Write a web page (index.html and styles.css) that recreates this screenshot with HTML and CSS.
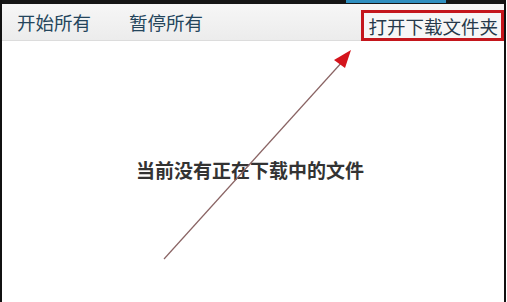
FILE: index.html
```html
<!DOCTYPE html>
<html lang="zh-CN">
<head>
  <meta charset="UTF-8" />
  <meta name="viewport" content="width=device-width, initial-scale=1.0" />
  <title>下载管理</title>
  <link rel="stylesheet" href="styles.css">
</head>
<body>
  <div class="window">
    <!-- cut-off edge of the window above -->
    <div class="top-strip">
      <span class="strip-fill"></span>
      <span class="strip-blue"></span>
      <span class="strip-fill short"></span>
    </div>

    <div class="toolbar">
      <a href="#" class="tool-link">开始所有</a>
      <a href="#" class="tool-link">暂停所有</a>
      <a href="#" class="tool-link open-folder">打开下载文件夹</a>
    </div>

    <div class="content">
      <p class="empty-text">当前没有正在下载中的文件</p>

      <!-- annotation arrow pointing at the folder button -->
      <svg class="arrow" width="507" height="261" viewBox="0 0 507 261">
        <line x1="164" y1="218" x2="343" y2="20" stroke="#8a6464" stroke-width="1.2" />
        <polygon points="351,9 334,19 345,27" fill="#d4141c" />
      </svg>
    </div>
  </div>
</body>
</html>
```

FILE: styles.css
```css
body {
  margin: 0;
  font-family: "Noto Sans CJK SC", "Noto Sans", sans-serif;
  background: #ffffff;
}

.window {
  position: relative;
  box-sizing: border-box;
  width: 506px;
  height: 100vh;
  border-left: 2px solid #111;
  border-right: 2px solid #111;
  display: flex;
  flex-direction: column;
  overflow: hidden;
}

.top-strip {
  display: flex;
  height: 4px;
  background: #151515;
}

.strip-fill {
  flex: 1;
}

.strip-fill.short {
  flex: 0 0 58px;
}

.strip-blue {
  flex: 0 0 100px;
  background: #2f8fc0;
  height: 3px;
}

.toolbar {
  display: flex;
  align-items: stretch;
  height: 36px;
  padding-left: 15px;
  background: linear-gradient(#f6f6f6, #ececec);
  border-bottom: 1px solid #dcdcdc;
}

.tool-link {
  display: flex;
  align-items: center;
  padding-bottom: 1px;
  margin-right: 38px;
  font-size: 18.5px;
  color: #24455c;
  text-decoration: none;
}

.tool-link.open-folder {
  margin-left: auto;
  margin-right: 0;
  margin-top: 6px;
  margin-bottom: -1px;
  padding: 0 3px 0 4px;
  border: 3px solid #c4161c;
  font-size: 18.5px;
  color: #26394a;
  background: #f6f6f6;
}

.content {
  position: relative;
  flex: 1;
  display: flex;
  align-items: center;
  justify-content: center;
}

.empty-text {
  margin: -5px 0 0 -6px;
  font-size: 19px;
  font-weight: bold;
  color: #333;
}

.arrow {
  position: absolute;
  left: -2px;
  top: 0;
}
```
